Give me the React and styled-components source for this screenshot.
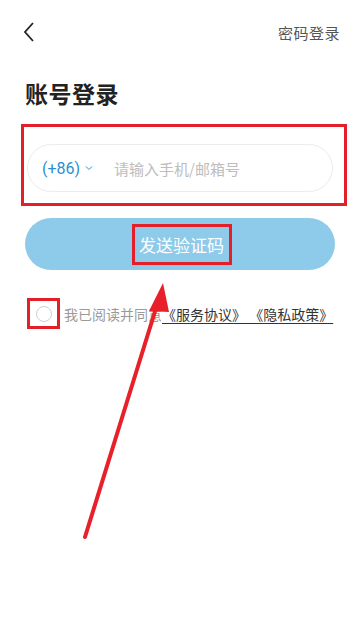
import React from "react";
import styled, { createGlobalStyle } from "styled-components";

const GlobalStyle = createGlobalStyle`
    html, body {
        margin: 0;
        padding: 0;
        background: #ffffff;
    }
    body {
        font-family: "Noto Sans CJK SC", "Noto Sans", sans-serif;
    }
`;

const Page = styled.div`
    position: relative;
    width: 360px;
    height: 621px;
    overflow: hidden;
    background: #fff;
    display: flex;
    flex-direction: column;
`;

const TopBar = styled.div`
    display: flex;
    align-items: center;
    justify-content: space-between;
    height: 24px;
    margin-top: 20px;
    padding: 0 20px 0 22px;
`;

const BackButton = styled.button`
    border: none;
    background: none;
    padding: 0;
    width: 20px;
    height: 24px;
    display: flex;
    align-items: center;
`;

const SwitchLink = styled.span`
    font-size: 15px;
    color: #555;
    letter-spacing: 0.5px;
`;

const Title = styled.h1`
    margin: 33px 0 0 25px;
    font-size: 23px;
    font-weight: 700;
    color: #222;
    line-height: 32px;
    letter-spacing: 0.5px;
`;

const Highlight = styled.div`
    position: relative;
    border: 3px solid #e3202a;
    box-sizing: border-box;
`;

const InputFrame = styled(Highlight)`
    margin: 15px 13px 0 21px;
    height: 82px;
    padding: 17px 11px 0 3px;
`;

const InputPill = styled.div`
    height: 48px;
    border: 1px solid #ececec;
    border-radius: 24px;
    box-sizing: border-box;
    display: flex;
    align-items: center;
    padding-left: 14px;
`;

const Code = styled.span`
    font-family: "Roboto", "Noto Sans", sans-serif;
    font-size: 16px;
    color: #2b8fd1;
    display: flex;
    align-items: center;
    gap: 5px;
`;

const Placeholder = styled.span`
    margin-left: 21px;
    font-size: 15px;
    color: #bdbdbd;
`;

const SendButton = styled.div`
    margin: 12px 25px 0 25px;
    height: 52px;
    border-radius: 26px;
    background: #8ecae9;
    display: flex;
    align-items: center;
    justify-content: center;
`;

const SendLabel = styled(Highlight)`
    width: 100px;
    height: 41px;
    display: flex;
    align-items: center;
    justify-content: center;
    color: #fff;
    font-size: 17px;
    margin-left: 3px;
`;

const AgreeRow = styled.div`
    display: flex;
    align-items: center;
    margin: 28px 0 0 27px;
`;

const CheckFrame = styled(Highlight)`
    width: 33px;
    height: 31px;
    display: flex;
    align-items: center;
    justify-content: center;
`;

const Circle = styled.span`
    width: 16px;
    height: 16px;
    border-radius: 50%;
    border: 1px solid #cfcfcf;
    box-sizing: border-box;
`;

const AgreeText = styled.span`
    margin-left: 4px;
    font-size: 14px;
    color: #9a9a9a;
    white-space: pre;
`;

const Doc = styled.span`
    color: #333;
    text-decoration: underline;
    text-underline-offset: 3px;
`;

const Arrow = styled.svg`
    position: absolute;
    left: 0;
    top: 0;
    pointer-events: none;
`;

export default function App() {
    return (
        <Page>
            <GlobalStyle />
            <TopBar>
                <BackButton>
                    <svg width="14" height="22" viewBox="0 0 14 22">
                        <path d="M11 2 L3 11 L11 20" fill="none" stroke="#222" strokeWidth="1.8" />
                    </svg>
                </BackButton>
                <SwitchLink>密码登录</SwitchLink>
            </TopBar>
            <Title>账号登录</Title>
            <InputFrame>
                <InputPill>
                    <Code>
                        (+86)
                        <svg width="8" height="6" viewBox="0 0 8 6">
                            <path d="M1 1.5 L4 4.5 L7 1.5" fill="none" stroke="#2b8fd1" strokeWidth="1" />
                        </svg>
                    </Code>
                    <Placeholder>请输入手机/邮箱号</Placeholder>
                </InputPill>
            </InputFrame>
            <SendButton>
                <SendLabel>发送验证码</SendLabel>
            </SendButton>
            <AgreeRow>
                <CheckFrame>
                    <Circle />
                </CheckFrame>
                <AgreeText>
                    我已阅读并同意<Doc>《服务协议》 《隐私政策》</Doc>
                </AgreeText>
            </AgreeRow>
            <Arrow width="360" height="621" viewBox="0 0 360 621">
                <line x1="85" y1="537" x2="157" y2="305" stroke="#e8202a" strokeWidth="4" strokeLinecap="round" />
                <polygon points="163,283 149,311 169,312" fill="#e8202a" />
            </Arrow>
        </Page>
    );
}
